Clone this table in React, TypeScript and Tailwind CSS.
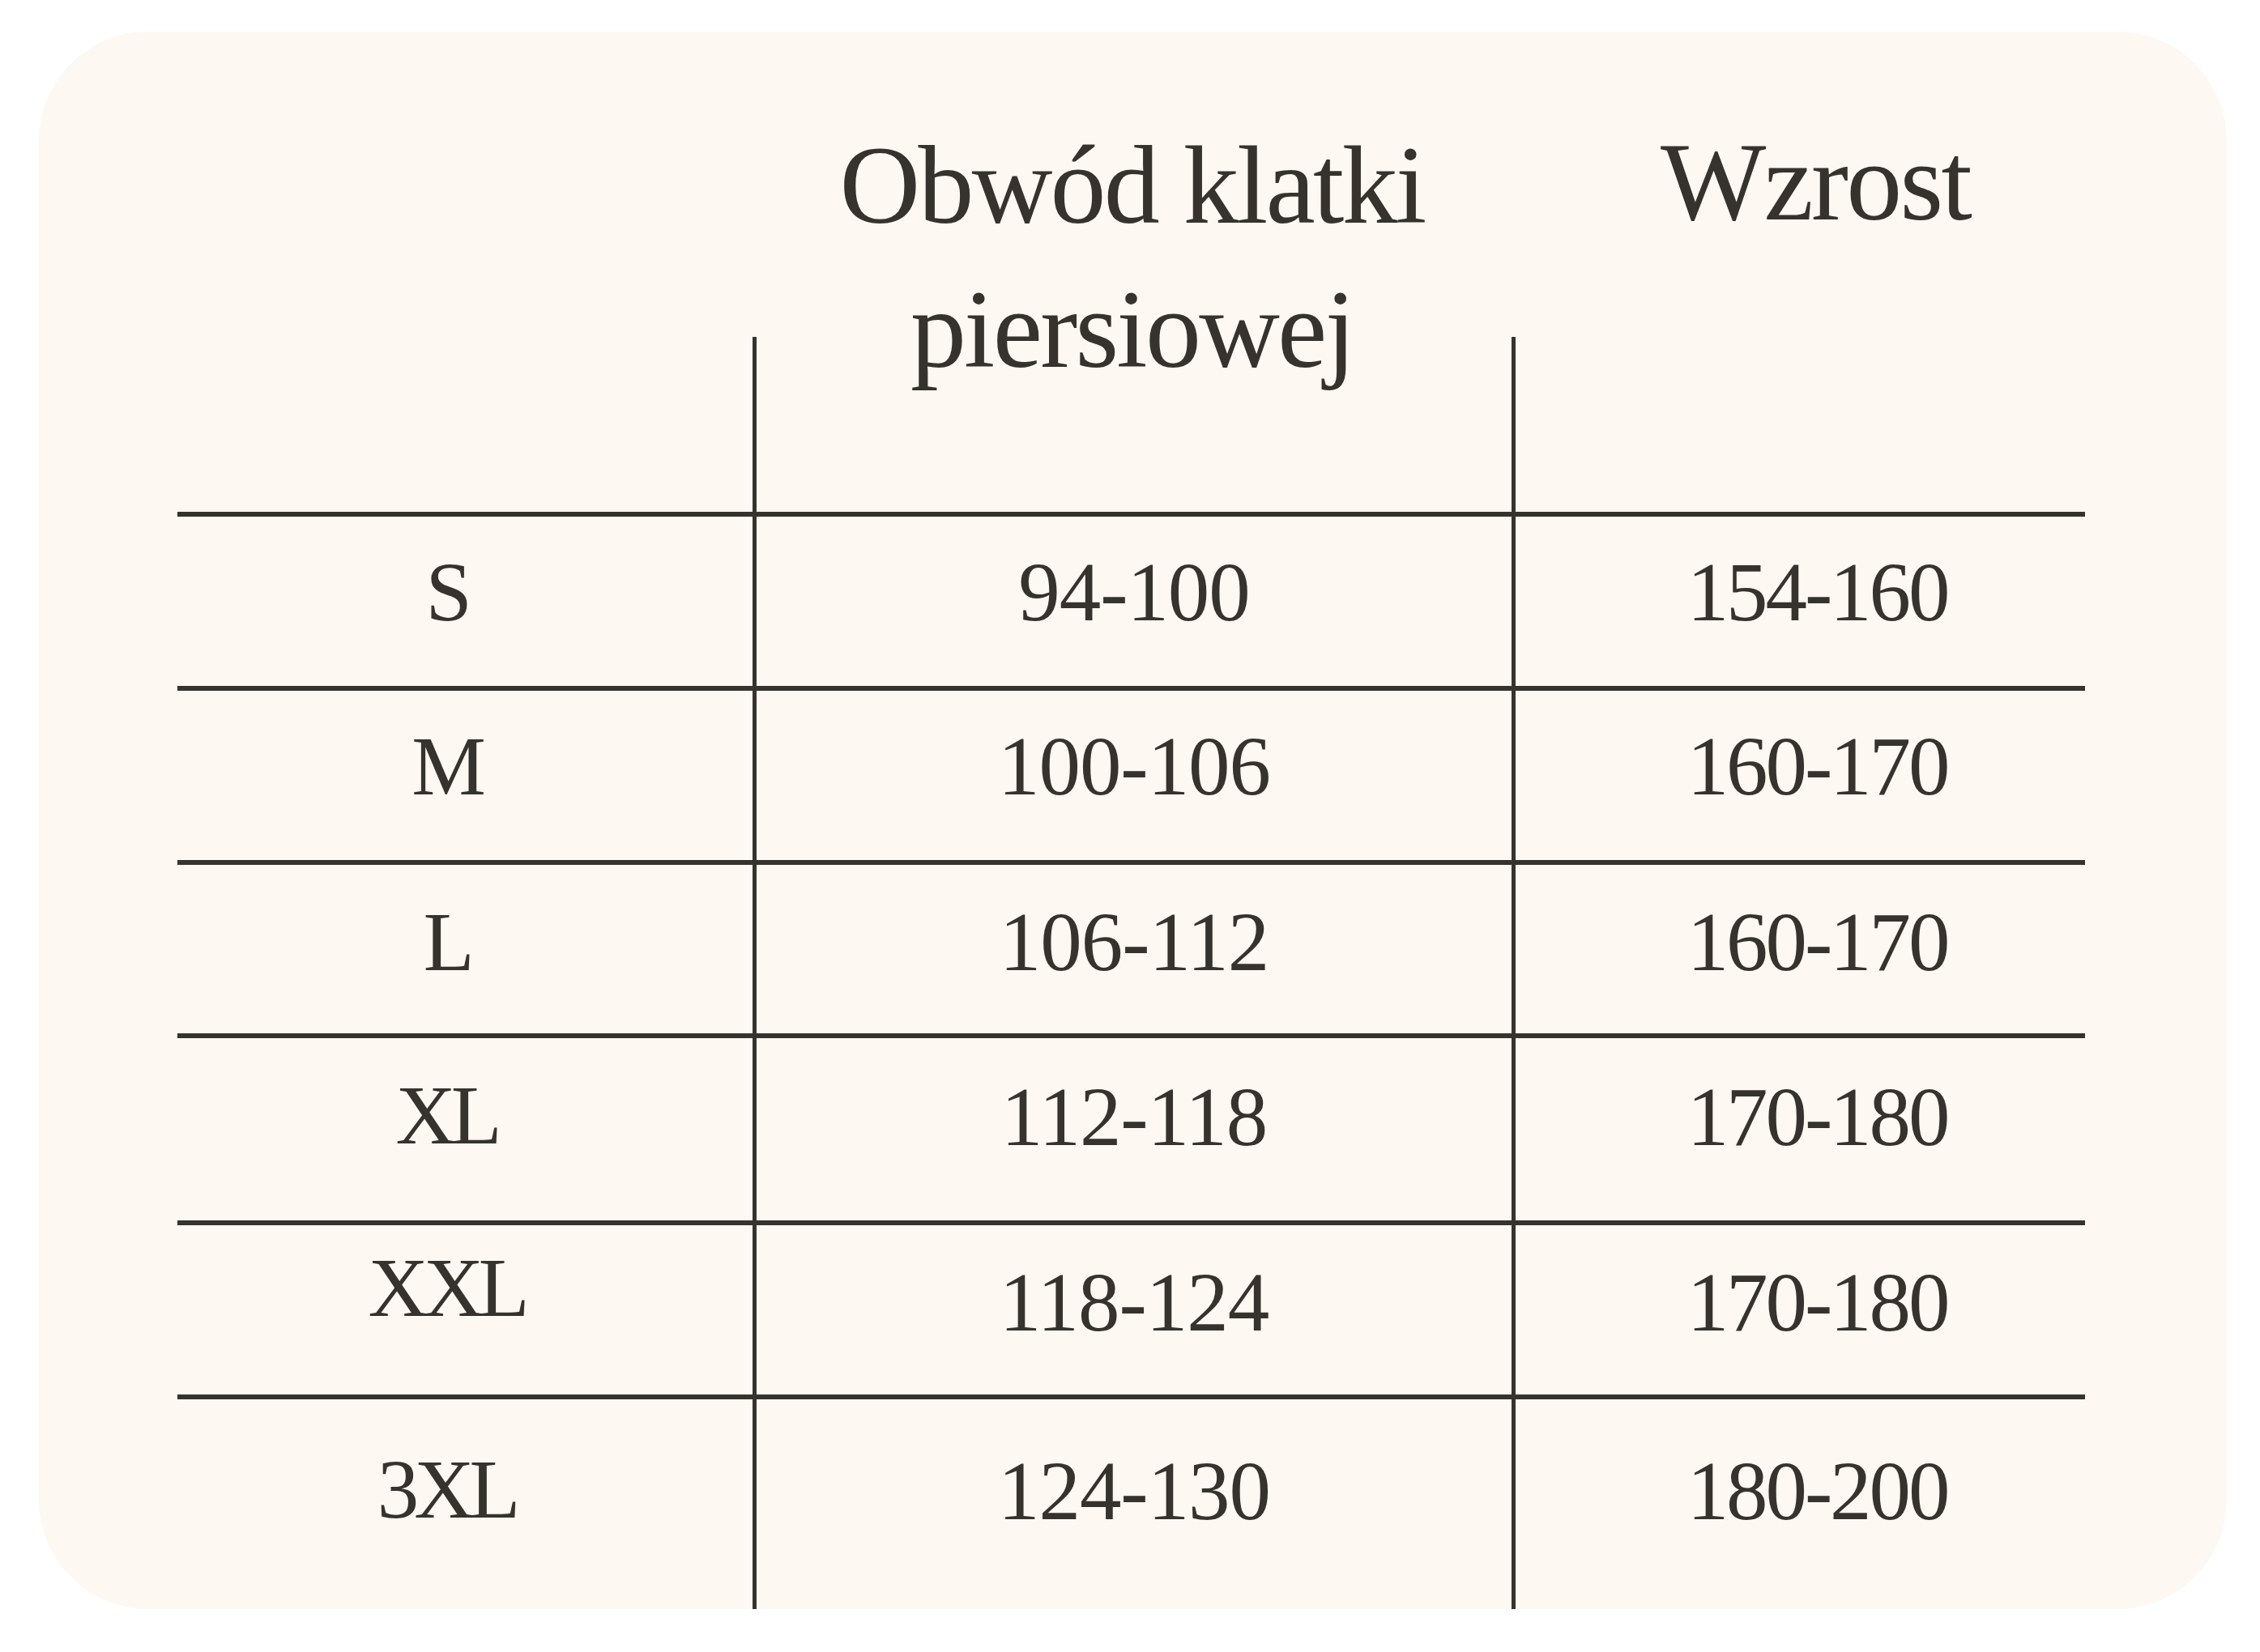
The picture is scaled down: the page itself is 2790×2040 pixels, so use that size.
const rows = [
  { size: "S", chest: "94-100", height: "154-160", h: "h-[215px]", pt: "pt-[42px]", spt: "pt-[42px]" },
  { size: "M", chest: "100-106", height: "160-170", h: "h-[215px]", pt: "pt-[42px]", spt: "pt-[42px]" },
  { size: "L", chest: "106-112", height: "160-170", h: "h-[214px]", pt: "pt-[44px]", spt: "pt-[44px]" },
  { size: "XL", chest: "112-118", height: "170-180", h: "h-[231px]", pt: "pt-[46px]", spt: "pt-[44px]" },
  { size: "XXL", chest: "118-124", height: "170-180", h: "h-[215px]", pt: "pt-[44px]", spt: "pt-[26px]" },
  { size: "3XL", chest: "124-130", height: "180-200", h: "flex-1", pt: "pt-[62px]", spt: "pt-[60px]" },
]

export default function App() {
  return (
    <div className="min-h-screen w-full bg-white pt-[39px] pl-[48px]">
      <div
        className="w-[2701px] h-[1948px] rounded-[135px] bg-[#fdf8f1] pl-[171px] pr-[175px] flex flex-col text-[#36332e]"
        style={{ fontFamily: '"Liberation Serif", "Times New Roman", serif' }}
      >
        {/* Header */}
        <div className="grid grid-cols-[710px_937px_708px] h-[593px] shrink-0">
          <div />
          <div className="flex flex-col">
            <div className="h-[377px] shrink-0 pt-[101px] text-center text-[138px] leading-[178px] tracking-[-0.02em]">
              Obwód klatki
              <br />
              piersiowej
            </div>
            <div className="flex-1 border-l-[5px] border-[#36332e]" />
          </div>
          <div className="flex flex-col">
            <div className="h-[377px] shrink-0 pt-[97px] pl-[42px] text-center text-[138px] leading-[178px] tracking-[-0.02em]">
              Wzrost
            </div>
            <div className="flex-1 border-l-[5px] border-[#36332e]" />
          </div>
        </div>

        {/* Rows */}
        {rows.map((r) => (
          <div
            key={r.size}
            className={`grid grid-cols-[710px_937px_708px] border-t-[6px] border-[#36332e] text-[103px] leading-none ${r.h}`}
          >
            <div className={`text-center pr-[46px] tracking-[-0.06em] ${r.spt}`}>{r.size}</div>
            <div className={`text-center border-l-[5px] border-[#36332e] tracking-[-0.01em] ${r.pt}`}>{r.chest}</div>
            <div className={`text-center pl-[42px] border-l-[5px] border-[#36332e] tracking-[-0.03em] ${r.pt}`}>{r.height}</div>
          </div>
        ))}
      </div>
    </div>
  )
}
